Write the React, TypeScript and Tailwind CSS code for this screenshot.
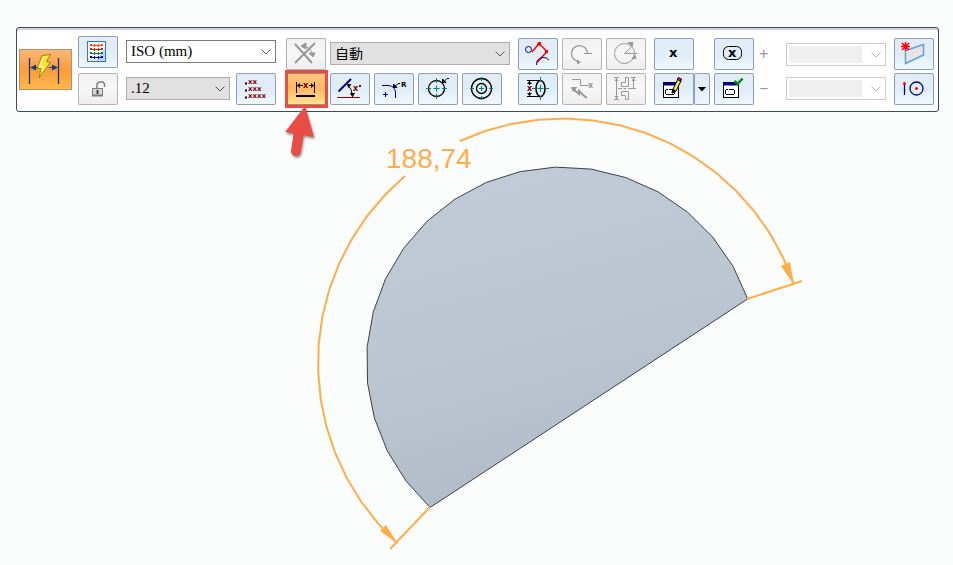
import React from "react";
import clsx from "clsx";

interface ToolButtonProps {
  label: string;
  disabled?: boolean;
  active?: boolean;
  children: React.ReactNode;
}

const ToolButton: React.FC<ToolButtonProps> = ({ label, disabled, active, children }) => {
  return (
    <button
      type="button"
      aria-label={label}
      title={label}
      disabled={disabled}
      className={clsx(
        "block h-8 w-10 shrink-0 rounded-[2px] border-0 p-0",
        disabled &&
          "bg-linear-to-b from-[#f0f0f0] via-[#f7f7f7] to-[#ededed] shadow-[inset_0_0_0_1px_#b2b4b8]",
        active &&
          "bg-linear-to-b from-[#fcc682] via-[#fdb960] to-[#ffe892] shadow-[inset_0_0_0_1px_#a88a60]",
        !disabled &&
          !active &&
          "bg-linear-to-b from-[#e2ecf6] via-[#e0edf6] to-[#f0f8fd] shadow-[inset_0_0_0_1px_#8c9fbd]"
      )}
    >
      <svg viewBox="0 0 40 32" className="block h-8 w-10" fill="none" stroke="#000">
        {children}
      </svg>
    </button>
  );
};

interface TinyTextProps {
  x: number;
  y: number;
  size?: number;
  color?: string;
  children: string;
}

// Small bold lettering inside the icons
const TinyText: React.FC<TinyTextProps> = ({ x, y, size = 8, color = "#800000", children }) => (
  <text
    x={x}
    y={y}
    fontSize={size}
    fill={color}
    stroke="none"
    fontWeight="bold"
    fontFamily="DejaVu Sans, sans-serif"
  >
    {children}
  </text>
);

interface DropDownProps {
  label: string;
  id?: string;
  value: string;
  look: "white" | "gray" | "empty";
  className?: string;
  textClass?: string;
}

const DropDown: React.FC<DropDownProps> = ({ label, id, value, look, className, textClass }) => {
  return (
    <div className={clsx("relative h-[23px]", className)}>
      <select
        id={id}
        aria-label={label}
        disabled={look === "empty"}
        className={clsx(
          "block h-full w-full appearance-none border pr-6 pl-1 leading-5 text-black",
          look === "white" && "border-[#7a7a7a] bg-white",
          look === "gray" && "border-[#adadad] bg-[#e1e1e1]",
          look === "empty" && "border-[#cccccc] bg-white",
          textClass
        )}
      >
        <option>{value}</option>
      </select>
      {look === "empty" && (
        <span className="pointer-events-none absolute inset-y-[3px] right-6 left-[3px] bg-[#efefef]" />
      )}
      <svg
        viewBox="0 0 10 6"
        className="pointer-events-none absolute top-[9px] right-[5px] h-[6px] w-[10px]"
        fill="none"
        stroke={look === "empty" ? "#b4b4b4" : "#555"}
      >
        <path d="M.5 .5L5 5L9.5 .5" />
      </svg>
    </div>
  );
};

const SERIF = "font-['Liberation_Serif','Noto_Sans_CJK_TC',serif] text-[15px] pb-[2px]";

const ListIcon = () => (
  <>
    <rect x="9.5" y="5.5" width="18" height="20" fill="#f4faff" stroke="#3f74b5" />
    <path d="M27 12v13H18z" fill="#b9dbf6" stroke="none" />
    {["#f8481c", "#c02800", "#208028", "#0000c8"].map((color, i) => (
      <path
        key={color}
        stroke={color}
        shapeRendering="crispEdges"
        transform={`translate(0 ${i * 4})`}
        d="M12 9.5h4M16.5 8v3M17 9.5h1M18.5 9v1M19 9.5h1M20.5 8v3M21 9.5h4M12 8.5h2M23 8.5h2"
      />
    ))}
  </>
);

const LockIcon = () => (
  <g stroke="#7d7d7d">
    <path d="M19 15v-4l2-2h4l1.5 2v3" strokeWidth="1.5" />
    <rect x="14.5" y="15.5" width="10" height="7" fill="#d8d8d8" />
    <path d="M14 22.5h11" strokeWidth="2" />
    <path d="M19.5 17v4" strokeWidth="2" stroke="#444" />
  </g>
);

const PrecisionIcon = () => (
  <>
    <path d="M9 10.5h2M9 17.5h2M9 24.5h2" strokeWidth="2" />
    <TinyText x={12} y={11} size={7}>xx</TinyText>
    <TinyText x={12} y={18} size={7}>xxx</TinyText>
    <TinyText x={12} y={25} size={7}>xxxx</TinyText>
  </>
);

const AxisIcon = () => (
  <g stroke="#989898">
    <path d="M9 6L26 25M29 5L9 25" strokeWidth="2" />
    <path d="M16 8Q24 8 27 17" />
    <path d="M15 8l5-3v6zM27 19l-4-4h6z" fill="#989898" />
  </g>
);

const DistanceIcon = () => (
  <>
    <path d="M10.5 9v11M28.5 9v11M11 12.5h6M23 12.5h5" />
    <path d="M11 12.5l3-2.5v5zM28 12.5l-3-2.5v5z" fill="#000" stroke="none" />
    <TinyText x={17} y={15}>x</TinyText>
    <path d="M10 23h19" strokeWidth="2" />
  </>
);

const AngleIcon = () => (
  <>
    <path d="M8.5 18.5L21 6" stroke="#000090" strokeWidth="2" />
    <path d="M7 24.5h23" stroke="#a00000" />
    <path d="M18 12Q22 16 22.5 23" />
    <path d="M17 10.5l4.5 1-3.5 3.5zM22.5 24.5l-2.5-4.5h5z" fill="#000" stroke="none" />
    <TinyText x={23} y={18}>x</TinyText>
    <path d="M29 12h2v2h-2z" fill="#a00000" stroke="none" />
  </>
);

const RadiusIcon = () => (
  <>
    <path d="M8 12.5h6Q21.5 13 21.5 20v5" stroke="#000090" />
    <path d="M26 10.5h-2l-3 3" />
    <path d="M19.5 14.5v-3.5l3.5 3.5z" fill="#000" />
    <TinyText x={27} y={14} size={7} color="#000">R</TinyText>
    <path d="M11.5 19v5M9 21.5h5" stroke="#000090" />
  </>
);

const DiameterIcon = () => (
  <>
    <circle cx="18.5" cy="15.5" r="8" strokeWidth="1.3" />
    <path
      d="M8 15.5h5M15.5 15.5h6M24 15.5h5M18.5 5v5M18.5 12.5v6M18.5 21v5"
      stroke="#008080"
    />
    <path d="M31 5.5h-2l-3 3" />
    <path d="M24.5 9.5v-3.5l3.5 3.5z" fill="#000" />
  </>
);

const ConcentricIcon = () => (
  <>
    <circle cx="19.5" cy="15.5" r="10" strokeWidth="1.3" />
    <circle cx="19.5" cy="15.5" r="5" strokeWidth="1.3" />
    <path
      d="M8 15.5h4M17 15.5h5M27 15.5h4M19.5 4v4M19.5 13v5M19.5 23v4"
      stroke="#008080"
    />
  </>
);

const ChainIcon = () => (
  <>
    <circle cx="10.5" cy="11.5" r="3" stroke="#000090" />
    <path d="M14 14l7-8.5 8 8-10 11" stroke="#f00" strokeWidth="1.5" />
    <path d="M20 4h3v4l-4-1zM27 12h3v3h-3z" fill="#f00" stroke="none" />
    <path d="M18.5 27Q18.5 20.5 24 19.5Q29 19 31 22" stroke="#000090" />
  </>
);

const ArcLengthIcon = () => (
  <g stroke="#989898">
    <path d="M25.5 15.5A8 8 0 1 0 16.5 23.5" strokeWidth="1.3" />
    <path d="M22 15.5h8" />
    <path d="M19 24l-4-2.5v5z" fill="#989898" stroke="none" />
  </g>
);

const ArcAngleIcon = () => (
  <g stroke="#989898">
    <circle cx="18.5" cy="15.5" r="10" />
    <path d="M18.5 15.5h13M18.5 15.5L27 7" />
    <path d="M22 4.5h5l-1 4zM29 17l-3 3.5h4z" fill="#989898" />
  </g>
);

const SymmetricIcon = () => (
  <>
    <path d="M9 7.5h13M9 23.5h13M11.5 8v4M11.5 19v4" />
    <path d="M11.5 8l-2.5 3h5zM11.5 23l-2.5-3h5z" fill="#000" stroke="none" />
    <TinyText x={9} y={18}>x</TinyText>
    <ellipse cx="22.5" cy="15.5" rx="4.5" ry="8" strokeWidth="1.5" />
    <path
      d="M14 15.5h3M19.5 15.5h6M28 15.5h3M22.5 4v4M22.5 12v7M22.5 23v4"
      stroke="#008080"
    />
  </>
);

const JogIcon = () => (
  <g stroke="#989898">
    <path d="M10 6.5h8.5v6h8" />
    <TinyText x={26} y={15} color="#989898">x</TinyText>
    <path d="M11 16l6 5v-3l4 4 4 3" strokeWidth="2" />
    <path d="M9.5 14.5h5l-3 4z" fill="#989898" />
  </g>
);

const ProfileIcon = () => (
  <g stroke="#989898">
    <path d="M8 4.5h5M8 26.5h5M10.5 5v21M25 4.5h5M27.5 5v11" />
    <path d="M10.5 5l-2 3h4zM10.5 26l-2-3h4zM27.5 5l-2 3h4z" fill="#989898" stroke="none" />
    <path d="M19.5 4.5h3v9h-7v-4h4zM15.5 18.5h7v8h-3v-4h-4z" />
    <path d="M12 15.5h4M17.5 15.5h3M22 15.5h8" />
  </g>
);

const WindowShape = () => (
  <>
    <rect x="9.5" y="9.5" width="15" height="15" fill="#fff" />
    <path d="M9 11h16" stroke="#000090" strokeWidth="3" />
    <path d="M12 16.5h2M15 16.5h5M11.5 17v4M12 21.5h8M20.5 17v4" />
  </>
);

const EditFormatIcon = () => (
  <>
    <WindowShape />
    <path d="M18 20l1-4 5-10 3 2-5 10z" fill="#f4e858" />
    <path d="M18 20l1-4 2.5 2z" fill="#000" />
    <path d="M23 6l1.5-1.5 3 1.5-1 2.5z" fill="#e0205a" />
  </>
);

const CheckFormatIcon = () => (
  <>
    <WindowShape />
    <path d="M20.5 8l3 3 5-5.5" stroke="#008a10" strokeWidth="2.5" />
  </>
);

const PlaneIcon = () => (
  <>
    <path d="M11.5 12.5l18-6V17l-18 8.5z" fill="#e3e5e9" stroke="#65a0d2" strokeWidth="1.5" />
    <path d="M11.5 4v9M7 8.5h9M8 5l7 7M15 5l-7 7" stroke="#f00" strokeWidth="1.5" />
  </>
);

const PointIcon = () => (
  <>
    <path d="M10.5 10v12" stroke="#000080" strokeWidth="1.3" />
    <circle cx="22.5" cy="15.5" r="6.5" stroke="#000080" strokeWidth="1.3" />
    <circle cx="10.5" cy="10.5" r="1.5" fill="#f00" stroke="none" />
    <circle cx="22.5" cy="15.5" r="1.5" fill="#f00" stroke="none" />
  </>
);

const PointerArrow = () => (
  <svg
    viewBox="0 0 34 58"
    className="pointer-events-none absolute top-[30px] -left-[3px] z-10 h-[58px] w-[34px] drop-shadow-[1px_2px_1px_rgba(0,0,0,0.4)]"
  >
    <path d="M13 48L17 22" stroke="#ea4b45" strokeWidth="10" strokeLinecap="round" />
    <path d="M22 3L31 34L2 29z" fill="#ea4b45" />
  </svg>
);

const Toolbar: React.FC = () => {
  return (
    <header className="flex items-end rounded-[3px] border border-[#3b4b60] bg-white pt-2 pr-1 pb-[6px] pl-[2px] shadow-[inset_0_2px_0_#ccd3dc]">
      <button
        type="button"
        aria-label="Smart dimension"
        className="mb-[15px] h-[41px] w-[53px] shrink-0 bg-linear-to-b from-[#fbb97a] via-[#fb9b3c] to-[#ffb850] shadow-[inset_0_0_0_1px_#b5935c]"
      >
        <svg viewBox="0 0 53 41" className="block h-[41px] w-[53px]">
          <path d="M10.5 9v26M39.5 9v26" stroke="#123a80" strokeWidth="1.3" />
          <path d="M12 18.5h7M30 18.5h8" stroke="#123a80" />
          <path d="M11 18.5l6-3v6zM39 18.5l-6-3v6z" fill="#123a80" />
          <path
            d="M23 6.5l8.5-1-4 7 4 1L20 29l2-9.5h-4z"
            fill="#f7e336"
            stroke="#96841a"
            strokeLinejoin="round"
          />
          <path d="M24.5 8.5l-4 9h4l-1.5 4" fill="none" stroke="#fffbc0" />
        </svg>
      </button>

      <div className="ml-[6px] flex flex-col gap-[5px]">
        <ToolButton label="Dimension style list"><ListIcon /></ToolButton>
        <ToolButton label="Lock" disabled><LockIcon /></ToolButton>
      </div>

      <div className="ml-2 flex w-[150px] shrink-0 flex-col gap-[10px]">
        <DropDown label="Style" value="ISO (mm)" look="white" textClass={SERIF} />
        <div className="flex items-start gap-[6px]">
          <DropDown label="Round-off" value=".12" look="gray" className="mt-1 flex-1" textClass={SERIF} />
          <ToolButton label="Precision"><PrecisionIcon /></ToolButton>
        </div>
      </div>

      <div className="ml-[10px] flex flex-1 flex-col gap-[3px]">
        <div className="flex items-start gap-1">
          <ToolButton label="Dimension axis" disabled><AxisIcon /></ToolButton>
          <DropDown
            label="Orientation"
            value="自動"
            look="gray"
            className="mt-1 flex-1"
            textClass="font-['Noto_Sans_CJK_TC',sans-serif] text-sm pb-1"
          />
        </div>
        <div className="flex gap-1">
          <div className="relative">
            <ToolButton label="Distance" active><DistanceIcon /></ToolButton>
            <span className="pointer-events-none absolute -top-[3px] -right-[2px] -bottom-[3px] -left-px border-3 border-[#ea4b45]" />
            <PointerArrow />
          </div>
          <ToolButton label="Angle"><AngleIcon /></ToolButton>
          <ToolButton label="Radius"><RadiusIcon /></ToolButton>
          <ToolButton label="Diameter"><DiameterIcon /></ToolButton>
          <ToolButton label="Concentric diameter"><ConcentricIcon /></ToolButton>
        </div>
      </div>

      <div className="ml-2 grid grid-cols-3 gap-x-1 gap-y-[3px]">
        <ToolButton label="Tangent"><ChainIcon /></ToolButton>
        <ToolButton label="Arc length" disabled><ArcLengthIcon /></ToolButton>
        <ToolButton label="Arc angle" disabled><ArcAngleIcon /></ToolButton>
        <ToolButton label="Symmetric diameter"><SymmetricIcon /></ToolButton>
        <ToolButton label="Jog" disabled><JogIcon /></ToolButton>
        <ToolButton label="Profile" disabled><ProfileIcon /></ToolButton>
      </div>

      <div className="ml-2 flex flex-col gap-[3px]">
        <ToolButton label="Dimension type">
          <TinyText x={15} y={19} size={13} color="#000">x</TinyText>
        </ToolButton>
        <div className="flex">
          <ToolButton label="Prefix"><EditFormatIcon /></ToolButton>
          <button
            type="button"
            aria-label="More prefixes"
            className="h-8 w-4 rounded-[2px] bg-linear-to-b from-[#e2ecf6] via-[#e0edf6] to-[#f0f8fd] shadow-[inset_0_0_0_1px_#8c9fbd]"
          >
            <svg viewBox="0 0 16 32" className="block h-8 w-4">
              <path d="M4 14h8l-4 4.5z" />
            </svg>
          </button>
        </div>
      </div>

      <div className="ml-1 flex flex-col gap-[3px]">
        <ToolButton label="Inspect">
          <rect x="9.5" y="8.5" width="18" height="13" rx="5" />
          <TinyText x={14} y={19} size={13} color="#000">x</TinyText>
        </ToolButton>
        <ToolButton label="Apply prefix"><CheckFormatIcon /></ToolButton>
      </div>

      <div className="flex w-8 shrink-0 flex-col gap-[3px] pl-[5px] font-['Liberation_Sans',sans-serif] text-base leading-8 text-[#999]">
        <label htmlFor="upper">+</label>
        <label htmlFor="lower">−</label>
      </div>

      <div className="mb-[5px] flex w-[100px] shrink-0 flex-col gap-[11px]">
        <DropDown id="upper" label="Upper tolerance" value="" look="empty" />
        <DropDown id="lower" label="Lower tolerance" value="" look="empty" />
      </div>

      <div className="ml-2 flex flex-col gap-[3px]">
        <ToolButton label="Dimension plane"><PlaneIcon /></ToolButton>
        <ToolButton label="Point"><PointIcon /></ToolButton>
      </div>
    </header>
  );
};

const CENTER = { x: 562.5, y: 363 };

// Faceted arc as a points string, angles in degrees counter-clockwise
const arcPoints = (radius: number, from: number, to: number, steps: number) =>
  Array.from({ length: steps + 1 }, (_, i) => {
    const angle = ((from + ((to - from) * i) / steps) * Math.PI) / 180;
    const x = CENTER.x + radius * Math.cos(angle);
    const y = CENTER.y - radius * Math.sin(angle);
    return `${x.toFixed(1)},${y.toFixed(1)}`;
  }).join(" ");

const Model: React.FC = () => {
  return (
    <svg viewBox="0 112 953 453" className="block h-auto w-full" role="img" aria-label="Arc dimension">
      <defs>
        <linearGradient id="face" x1="0.3" y1="0" x2="0.6" y2="1">
          <stop offset="0" stopColor="#c1cbd7" />
          <stop offset="0.5" stopColor="#bbc6d2" />
          <stop offset="1" stopColor="#b0bac7" />
        </linearGradient>
      </defs>
      <polygon points={arcPoints(196, 19.1, 227.5, 20)} fill="url(#face)" stroke="#3c4148" />
      <g fill="none" stroke="#ffad4a" strokeWidth="2">
        <polyline points={arcPoints(244.5, 19.1, 114.8, 15)} />
        <polyline points={arcPoints(244.5, 130.1, 227.5, 15)} />
        <path d="M747 299L802 281M430 507L390 549" />
      </g>
      <path d="M781 266L790 262L794 285zM380 531L386 525L398 544z" fill="#ffad4a" />
      <text
        x="386"
        y="168"
        fontSize="28"
        fill="#ffad4a"
        fontFamily="Liberation Sans, Arial, sans-serif"
      >
        188,74
      </text>
    </svg>
  );
};

const App: React.FC = () => {
  return (
    <main className="min-h-screen bg-[#fbfdfc]">
      <div className="pt-[27px] pr-[14px] pl-4">
        <Toolbar />
      </div>
      <Model />
    </main>
  );
};

export default App;
